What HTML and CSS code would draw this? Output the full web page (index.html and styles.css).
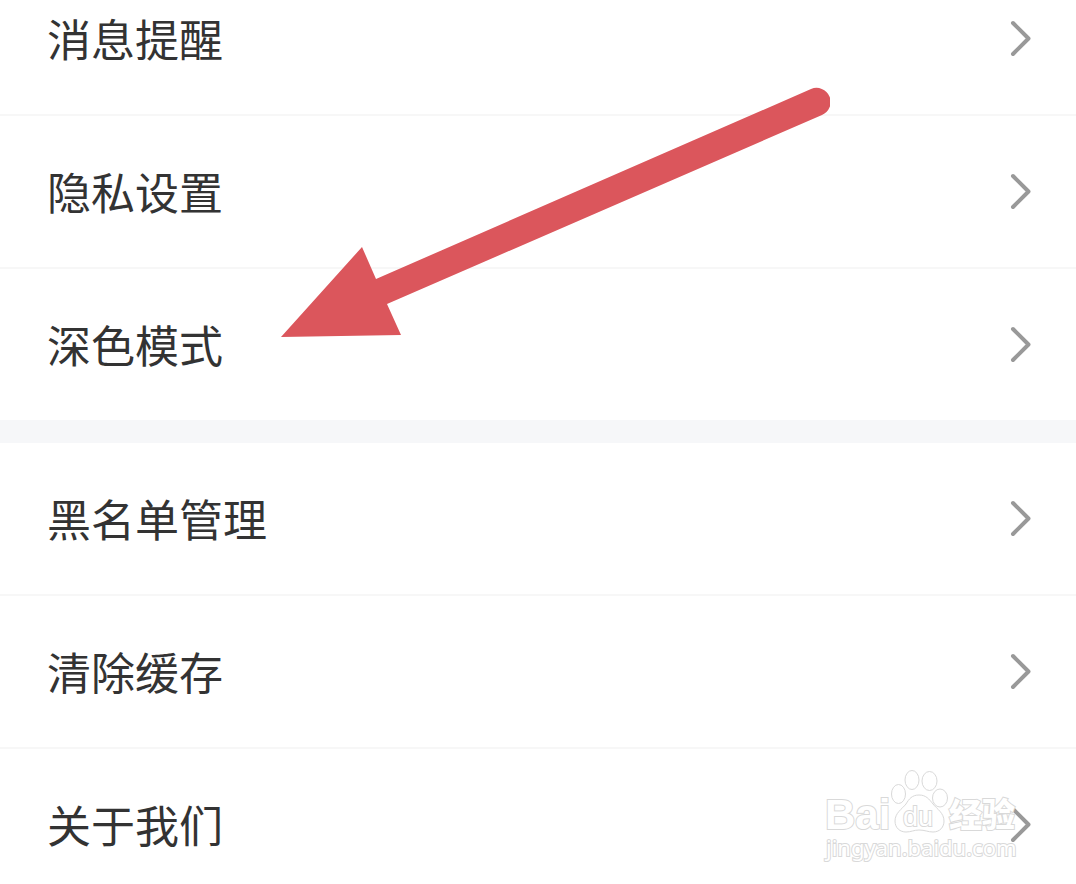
FILE: index.html
```html
<!DOCTYPE html>
<html lang="zh-CN">
<head>
    <meta charset="UTF-8">
    <meta name="viewport" content="width=device-width, initial-scale=1.0">
    <title>设置</title>
    <link rel="stylesheet" href="styles.css">
</head>
<body>

    <!-- 设置列表 -->
    <main class="settings">
        <nav class="group">
            <a class="row row-first" href="#message">
                <span>消息提醒</span>
                <svg class="chevron" viewBox="0 0 24 38"><path d="M4 4L19.500 19.500L4 35"/></svg>
            </a>
            <a class="row" href="#privacy">
                <span>隐私设置</span>
                <svg class="chevron" viewBox="0 0 24 38"><path d="M4 4L19.500 19.500L4 35"/></svg>
            </a>
            <a class="row" href="#dark">
                <span>深色模式</span>
                <svg class="chevron" viewBox="0 0 24 38"><path d="M4 4L19.500 19.500L4 35"/></svg>
            </a>
        </nav>
        <nav class="group">
            <a class="row" href="#blacklist">
                <span>黑名单管理</span>
                <svg class="chevron" viewBox="0 0 24 38"><path d="M4 4L19.500 19.500L4 35"/></svg>
            </a>
            <a class="row" href="#cache">
                <span>清除缓存</span>
                <svg class="chevron" viewBox="0 0 24 38"><path d="M4 4L19.500 19.500L4 35"/></svg>
            </a>
            <a class="row row-last" href="#about">
                <span>关于我们</span>
                <svg class="chevron" viewBox="0 0 24 38"><path d="M4 4L19.500 19.500L4 35"/></svg>
            </a>
        </nav>

        <!-- 红色指示箭头 -->
        <svg class="arrow" viewBox="0 0 550 252" aria-hidden="true">
            <path d="M1 250L82 160L96 192L531 2A14 14 0 0 1 542 28L107 217L121 248Z"/>
        </svg>

        <!-- 水印 -->
        <svg class="watermark" viewBox="0 0 200 100">
            <text class="mark-bai" x="3" y="62">Bai</text>
            <g class="paw">
                <ellipse cx="76.500" cy="27" rx="7" ry="9.500"/>
                <ellipse cx="90" cy="13" rx="7" ry="9.500"/>
                <ellipse cx="107.500" cy="14" rx="7.500" ry="9.500"/>
                <ellipse cx="118" cy="31" rx="7.500" ry="9"/>
                <path d="M97 28C90 28 87 32 84 37C80 42 73 46 73 54C73 61 78 65 84 65C89 65 92 63 97 63C103 63 106 65 111 65C118 65 122 60 122 54C122 46 115 42 111 37C107 32 104 28 97 28Z"/>
            </g>
            <text class="mark-du" x="81" y="59">du</text>
            <text class="mark-jingyan" x="127" y="60">经验</text>
            <text class="mark-url" x="4" y="89">jingyan.baidu.com</text>
        </svg>
    </main>

</body>
</html>
```
FILE: styles.css
```css
/* 全体 */
body {
    margin: 0;
    background-color: #ffffff;
    color: #333333;
    font-family: "Noto Sans CJK SC", sans-serif;
}

.settings {
    position: relative;
    overflow: hidden;
}

/* 分组之间的灰色间隔 */
.group + .group {
    border-top: 23px solid #f6f7f9;
}

/* 每一行 */
.row {
    display: flex;
    align-items: center;
    justify-content: space-between;
    padding: 43px 43px 44px 47px;
    border-bottom: 2px solid #f7f7f7;
    color: inherit;
    font-size: 44px;
    line-height: 64px;
    text-decoration: none;
}

.row:last-child {
    border-bottom: none;
}

.row-first {
    padding-top: 6px;
}

.row-last {
    padding-bottom: 28px;
}

.chevron {
    width: 24px;
    height: 38px;
    fill: none;
    stroke: #999999;
    stroke-width: 4;
    stroke-linecap: round;
    stroke-linejoin: round;
}

/* 箭头 */
.arrow {
    position: absolute;
    left: 280px;
    top: 87px;
    width: 550px;
    height: 252px;
    fill: #db565c;
    pointer-events: none;
}

/* 水印 */
.watermark {
    position: absolute;
    right: 54px;
    bottom: 17px;
    width: 200px;
    height: 100px;
    fill: #ffffff;
    stroke: #d9d9d9;
    stroke-width: 1;
    pointer-events: none;
}

.watermark text {
    stroke-width: 2;
    paint-order: stroke;
}

.mark-bai {
    font: bold 42px "Liberation Sans", sans-serif;
}

.mark-du {
    font: 27px "Liberation Sans", sans-serif;
}

.mark-jingyan {
    font: 900 33px "Noto Sans CJK SC", sans-serif;
}

.mark-url {
    font: 22px "Noto Sans", sans-serif;
}
```
